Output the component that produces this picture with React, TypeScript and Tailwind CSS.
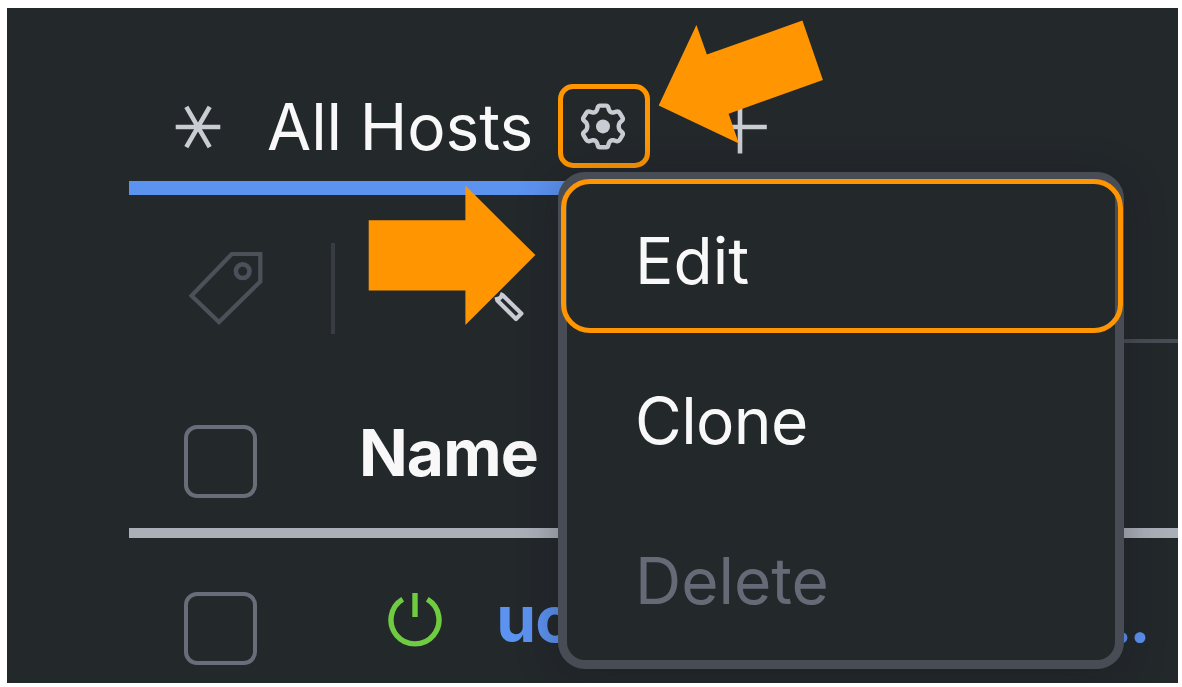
const ORANGE = "#ff9500";

function Checkbox() {
  return <span className="block h-[73px] w-[73px] shrink-0 rounded-[13px] border-[4.5px] border-[#686d79]" />;
}

function AsteriskIcon() {
  return (
    <svg className="h-12 w-12 shrink-0" viewBox="-24 -24 48 48" fill="none" stroke="#c9ccd2" strokeWidth="4.6">
      <path d="M-22.3 0H22.3M-11.7-20.2L11.7 20.2M11.7-20.2L-11.7 20.2" />
    </svg>
  );
}

function GearIcon() {
  return (
    <svg className="h-12 w-12" viewBox="-23 -24.4 48 48" fill="none" stroke="#c9ccd2" strokeWidth="4.4" strokeLinejoin="round">
      <path d="M-3-20.8H3Q4.8-20.8 5.2-19L6-16.5Q7.3-13.6 10-13.8L13.4-14.7Q15.6-15.2 16.7-13.4L19.4-9Q20.5-7.2 19-5.8L16.8-3.8Q14.6 0 16.8 3.8L19 5.8Q20.5 7.2 19.4 9L16.7 13.4Q15.6 15.2 13.4 14.7L10 13.8Q7.3 13.6 6 16.5L5.2 19Q4.8 20.8 3 20.8H-3Q-4.8 20.8-5.2 19L-6 16.5Q-7.3 13.6-10 13.8L-13.4 14.7Q-15.6 15.2-16.7 13.4L-19.4 9Q-20.5 7.2-19 5.8L-16.8 3.8Q-14.6 0-16.8-3.8L-19-5.8Q-20.5-7.2-19.4-9L-16.7-13.4Q-15.6-15.2-13.4-14.7L-10-13.8Q-7.3-13.6-6-16.5L-5.2-19Q-4.8-20.8-3-20.8Z" />
      <circle r="7" fill="#c9ccd2" stroke="none" />
    </svg>
  );
}

function PlusIcon() {
  return (
    <svg className="h-14 w-14 shrink-0" viewBox="-28 -28 56 56" stroke="#c9ccd2" strokeWidth="4.6">
      <path d="M-26.5 0H26.8M0-26.5V26.5" />
    </svg>
  );
}

function TagIcon() {
  return (
    <svg className="h-[76px] w-[76px] shrink-0" viewBox="188 250 76 76" fill="none" stroke="#4c5059" strokeWidth="4.2">
      <path d="M191.5 295.7L231.8 254H260.3V281.5L219 322Z" />
      <circle cx="242.7" cy="271.2" r="6.8" strokeWidth="4.6" />
    </svg>
  );
}

function ToolIcon() {
  return (
    <svg className="h-[76px] w-[76px] shrink-0" viewBox="450 250 76 76" fill="none" stroke="#c9ccd2" strokeWidth="4.2" strokeLinejoin="round">
      <path d="M502.7 295.2L521.4 313.6L516 319L497.4 300.5ZM502.7 295.2L500 294M497.4 300.5L496.4 297" />
    </svg>
  );
}

function PowerIcon() {
  return (
    <svg className="h-14 w-14 shrink-0" viewBox="-28 -28 56 56" fill="none" stroke="#6fcb40" strokeWidth="5.4">
      <path d="M-12.3-20.7A24 24 0 1 0 12.3-20.7M0-27V-3" />
    </svg>
  );
}

export default function App() {
  return (
    <div className="h-[687px] w-[1182px] overflow-hidden bg-white pt-[8.4px] pr-[4.4px] pb-[4px] pl-[6.6px] font-['Inter',sans-serif] text-[64px] leading-[78px]">
      <main className="relative flex h-full flex-col overflow-hidden bg-[#23282b] text-[#f8f8f8]">
        <nav className="flex h-[172.6px] shrink-0 items-start pt-[79px] pl-[167px]">
          <span className="mt-[15.2px]"><AsteriskIcon /></span>
          <span className="mt-[0.4px] ml-[45.5px] w-[290.5px] shrink-0 whitespace-nowrap tracking-[-0.1px]">All Hosts</span>
          <button className="-mt-[3.4px] flex h-[84px] w-[92px] shrink-0 items-center justify-center rounded-[15px] border-[5px] border-[#ff9500]">
            <GearIcon />
          </button>
          <span className="mt-[11.6px] ml-[62px]"><PlusIcon /></span>
        </nav>
        <div className="ml-[122.5px] h-[14px] w-[520px] shrink-0 bg-[#5c92f0]" />

        <section className="flex h-[147px] shrink-0 items-start pl-[181.4px]">
          <span className="mt-[55px]"><TagIcon /></span>
          <span className="mt-[48px] ml-[67px] h-[91px] w-[4px] bg-[#393d43]" />
          <span className="mt-[55px] ml-[115px]"><ToolIcon /></span>
          <span className="mt-[144px] ml-[474px] h-1 flex-1 bg-[#484c55]" />
        </section>

        <header className="ml-[122.4px] flex h-[195.6px] shrink-0 items-start border-b-10 border-[#abafb8] pt-[83px] pl-[55.5px]">
          <Checkbox />
          <strong className="-mt-[11.4px] ml-[101.4px] tracking-[-0.8px]">Name</strong>
        </header>

        <div className="flex shrink-0 items-start pt-[54px] pl-[177.7px]">
          <Checkbox />
          <span className="ml-[129.4px]"><PowerIcon /></span>
          <div className="-mt-[11.4px] ml-[53.6px] flex w-[651px] shrink-0 justify-between font-bold text-[#5c92f0]">
            <span className="tracking-[-0.8px]">uc</span>
            <span className="tracking-[-3.4px]">...</span>
          </div>
        </div>

        <div className="absolute top-[163.6px] left-[551px] flex h-[497.5px] w-[566.5px] flex-col rounded-[27px] border-9 border-[#484d55] bg-[#23282b] shadow-[0_6px_42px_rgba(20,22,32,0.32)]">
          <span className="pt-[41px] pl-[68.4px]">Edit</span>
          <span className="pt-[82px] pl-[68.4px] tracking-[-0.6px]">Clone</span>
          <span className="pt-[82px] pl-[68.4px] text-[#656a76]">Delete</span>
        </div>
        <div className="absolute top-[170.6px] left-[554.4px] h-[154px] w-[562px] rounded-[29px] border-5 border-[#ff9500]" />
        <svg className="pointer-events-none absolute top-0 left-0 h-[340px] w-[840px]" viewBox="6.6 8.4 840 340" fill={ORANGE}>
          <path d="M802 21L822.5 80.3L728.2 114.2L738.5 144L658.3 105.8L696 25.5L706.5 54.8Z" />
          <path d="M368.3 220.6H465V186L535 255.5L465 325.5V290.8H368.3Z" />
        </svg>
      </main>
    </div>
  );
}
